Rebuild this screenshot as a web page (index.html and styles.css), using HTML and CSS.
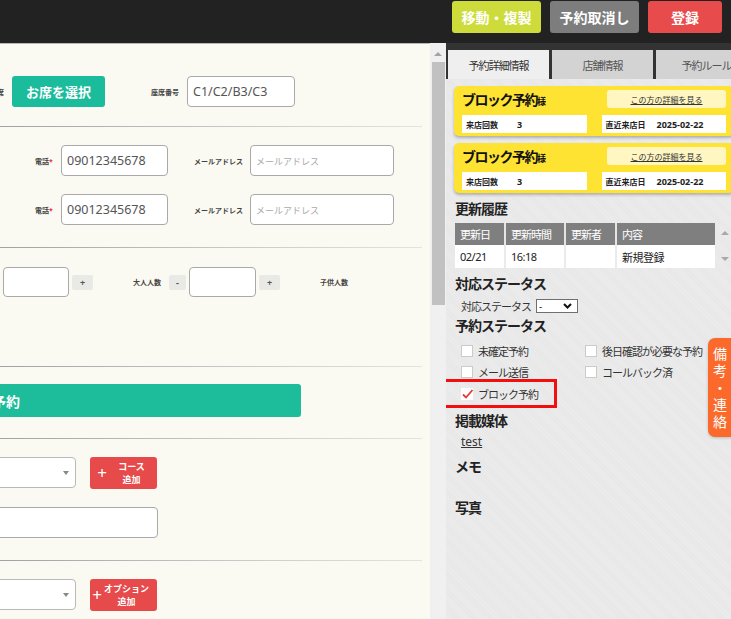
FILE: index.html
```html
<!DOCTYPE html>
<html lang="ja">
<head>
    <meta charset="UTF-8">
    <title>予約詳細</title>
    <link rel="stylesheet" href="styles.css">
</head>
<body>
    <header class="topbar">
        <button class="btn-top lime">移動・複製</button>
        <button class="btn-top gray">予約取消し</button>
        <button class="btn-top red">登録</button>
    </header>

    <div class="page">
        <main class="form">
            <section class="sec s1">
                <div class="row">
                    <span class="lbl seat-lbl">お席</span>
                    <button class="btn-seat">お席を選択</button>
                    <span class="lbl seatno-lbl">座席番号</span>
                    <input class="inp seatno" type="text" value="C1/C2/B3/C3">
                </div>
            </section>
            <hr class="rule">

            <section class="sec s2">
                <div class="row">
                    <span class="lbl tel-lbl">電話<span class="req">*</span></span>
                    <input class="inp tel" type="text" value="09012345678">
                    <span class="lbl mail-lbl">メールアドレス</span>
                    <input class="inp mail" type="text" placeholder="メールアドレス">
                </div>
                <div class="row">
                    <span class="lbl tel-lbl">電話<span class="req">*</span></span>
                    <input class="inp tel" type="text" value="09012345678">
                    <span class="lbl mail-lbl">メールアドレス</span>
                    <input class="inp mail" type="text" placeholder="メールアドレス">
                </div>
            </section>
            <hr class="rule">

            <section class="sec s3">
                <div class="row row-num">
                    <input class="inp num first" type="text">
                    <button class="step">+</button>
                    <span class="lbl adult-lbl">大人人数</span>
                    <button class="step minus">-</button>
                    <input class="inp num" type="text">
                    <button class="step">+</button>
                    <span class="lbl kid-lbl">子供人数</span>
                </div>
            </section>
            <hr class="rule">

            <section class="sec s4">
                <div class="name-bar">ブロック予約</div>
            </section>
            <hr class="rule">

            <section class="sec s5">
                <div class="row">
                    <div class="sel"></div>
                    <button class="btn-add"><span class="plus">+</span><span class="add-txt">コース<br>追加</span></button>
                </div>
                <div class="row">
                    <input class="inp wide" type="text">
                </div>
            </section>
            <hr class="rule">

            <section class="sec s6">
                <div class="row">
                    <div class="sel"></div>
                    <button class="btn-add"><span class="plus">+</span><span class="add-txt">オプション<br>追加</span></button>
                </div>
            </section>
        </main>

        <div class="scrollbar">
            <span class="sb-up"></span>
            <span class="sb-thumb"></span>
        </div>

        <aside class="side">
            <nav class="tabs">
                <a class="tab active">予約詳細情報</a>
                <a class="tab">店舗情報</a>
                <a class="tab">予約ルール</a>
            </nav>

            <div class="detail">
                <div class="card">
                    <div class="card-head">
                        <span class="card-name">ブロック予約<small>様</small></span>
                        <a class="card-link">この方の詳細を見る</a>
                    </div>
                    <div class="card-cells">
                        <div class="cell"><span class="cell-k">来店回数</span><span class="cell-v">3</span></div>
                        <div class="cell"><span class="cell-k">直近来店日</span><span class="cell-v">2025-02-22</span></div>
                    </div>
                </div>
                <div class="card">
                    <div class="card-head">
                        <span class="card-name">ブロック予約<small>様</small></span>
                        <a class="card-link">この方の詳細を見る</a>
                    </div>
                    <div class="card-cells">
                        <div class="cell"><span class="cell-k">来店回数</span><span class="cell-v">3</span></div>
                        <div class="cell"><span class="cell-k">直近来店日</span><span class="cell-v">2025-02-22</span></div>
                    </div>
                </div>

                <h3 class="ttl">更新履歴</h3>
                <div class="hist">
                    <table class="hist-tbl">
                        <tr>
                            <th class="c1">更新日</th>
                            <th class="c2">更新時間</th>
                            <th class="c3">更新者</th>
                            <th class="c4">内容</th>
                        </tr>
                        <tr>
                            <td>02/21</td>
                            <td>16:18</td>
                            <td></td>
                            <td>新規登録</td>
                        </tr>
                    </table>
                    <span class="arr up"></span>
                    <span class="arr down"></span>
                </div>

                <h3 class="ttl">対応ステータス</h3>
                <div class="status-row">
                    <span>対応ステータス</span>
                    <div class="mini-sel">
                        <span>-</span>
                        <svg width="9" height="6" viewBox="0 0 9 6"><path d="M1 1 L4.5 4.5 L8 1" fill="none" stroke="#111" stroke-width="2"/></svg>
                    </div>
                </div>

                <h3 class="ttl">予約ステータス</h3>
                <div class="checks">
                    <label class="chk"><span class="cb"></span>未確定予約</label>
                    <label class="chk"><span class="cb"></span>後日確認が必要な予約</label>
                    <label class="chk"><span class="cb"></span>メール送信</label>
                    <label class="chk"><span class="cb"></span>コールバック済</label>
                    <label class="chk marked"><span class="cb on"><svg width="13" height="12" viewBox="0 0 13 12"><path d="M2 6.5 L5 9.5 L11.5 2" fill="none" stroke="#e5393b" stroke-width="1.8"/></svg></span>ブロック予約</label>
                </div>

                <h3 class="ttl">掲載媒体</h3>
                <a class="media">test</a>

                <h3 class="ttl memo">メモ</h3>
                <h3 class="ttl photo">写真</h3>
            </div>

            <div class="memo-tab">備考・連絡</div>
        </aside>
    </div>
</body>
</html>
```

FILE: styles.css
```css
body {
    margin: 0;
    width: 731px;
    height: 619px;
    overflow: hidden;
    font-family: "Noto Sans", "Noto Sans CJK JP", sans-serif;
    font-size: 12px;
    color: #333;
}

button, input {
    font-family: inherit;
}

/* top bar */
.topbar {
    height: 43px;
    box-sizing: border-box;
    background: #222;
    display: flex;
    justify-content: flex-end;
    align-items: flex-start;
    gap: 9px;
    padding: 1px 9px 0 0;
}

.btn-top {
    height: 32px;
    border: 0;
    border-radius: 3px;
    color: #fff;
    font-size: 14px;
    font-weight: bold;
    padding: 0;
}

.lime { width: 89px; background: #cddc3b; }
.gray { width: 89px; background: #7d7d7d; }
.red { width: 74px; background: #e84b4b; }

.page {
    display: flex;
    height: 576px;
}

/* left form */
.form {
    width: 430px;
    flex: none;
    overflow: hidden;
    box-sizing: border-box;
    border-top: 1px solid #b9b9b9;
    background: #fbfaf2;
}

.sec {
    display: flex;
    flex-direction: column;
}

.s1 { padding: 32px 0 19px; }
.s2 { padding: 18px 0 22px; gap: 18px; }
.s3 { padding: 19px 0 69px; }
.s4 { padding: 17px 0 21px; }
.s5 { padding: 18px 0 22px; gap: 19px; }
.s6 { padding: 18px 0 0; }

.rule {
    width: 422px;
    height: 1px;
    margin: 0;
    border: 0;
    background: linear-gradient(to right, #a2a2a2, #c8c8c8 55%, #e4e4dc);
}

.row {
    display: flex;
    align-items: center;
    height: 31px;
}

.lbl {
    font-size: 7px;
    font-weight: bold;
    color: #444;
    white-space: nowrap;
}

.req { color: #e33; }

.inp {
    box-sizing: border-box;
    height: 31px;
    border: 1px solid #a9a9a9;
    border-radius: 4px;
    background: #fff;
    padding: 0 5px;
    font-size: 12.5px;
    color: #555;
    outline: none;
}

.inp::placeholder {
    color: #aaa;
    font-size: 9px;
}

.seat-lbl { margin-left: -10px; width: 14px; }

.btn-seat {
    margin-left: 8px;
    width: 93px;
    height: 31px;
    border: 0;
    border-radius: 3px;
    background: #1abc9c;
    color: #fff;
    font-size: 13px;
    font-weight: bold;
}

.seatno-lbl { margin-left: 46px; }
.seatno { margin-left: 8px; width: 108px; }

.tel-lbl { margin-left: 35px; width: 20px; }
.tel { margin-left: 6px; width: 107px; }
.mail-lbl { margin-left: 26px; }
.mail { margin-left: 7px; width: 144px; }

.row-num { height: 30px; }

.num {
    height: 30px;
    width: 67px;
}

.num.first { margin-left: 3px; width: 66px; }

.step {
    margin-left: 3px;
    width: 21px;
    height: 15px;
    padding: 0;
    border: 0;
    border-radius: 2px;
    background: #e9e9e6;
    color: #555;
    font-size: 9px;
    font-weight: bold;
}

.step.minus { margin-left: 8px; width: 17px; margin-right: 3px; }

.adult-lbl { margin-left: 40px; }
.kid-lbl { margin-left: 40px; }

.name-bar {
    margin-left: -80px;
    width: 381px;
    height: 33px;
    box-sizing: border-box;
    padding-left: 16px;
    display: flex;
    align-items: center;
    border-radius: 3px;
    background: #1dbc9b;
    color: #fff;
    font-size: 14px;
    font-weight: bold;
}

.sel {
    position: relative;
    box-sizing: border-box;
    margin-left: -44px;
    width: 120px;
    height: 31px;
    border: 1px solid #b9b9b9;
    border-radius: 4px;
    background: #fff;
}

.sel::after {
    content: "";
    position: absolute;
    right: 6px;
    top: 13px;
    border-left: 3px solid transparent;
    border-right: 3px solid transparent;
    border-top: 4px solid #888;
}

.btn-add {
    margin-left: 14px;
    width: 67px;
    height: 32px;
    padding: 0;
    border: 0;
    border-radius: 3px;
    background: #e64a4a;
    color: #fff;
    display: flex;
    align-items: center;
}

.plus {
    width: 24px;
    font-size: 17px;
    text-align: center;
}

.add-txt {
    flex: 1;
    padding-right: 8px;
    font-size: 9px;
    font-weight: bold;
    line-height: 13px;
    text-align: center;
    white-space: nowrap;
}

.wide { margin-left: -40px; width: 198px; }

/* scrollbar */
.scrollbar {
    width: 16px;
    flex: none;
    background: #f0f0f0;
    display: flex;
    flex-direction: column;
    align-items: center;
}

.sb-up {
    margin-top: 9px;
    border-left: 4px solid transparent;
    border-right: 4px solid transparent;
    border-bottom: 4px solid #a3a3a3;
}

.sb-thumb {
    margin: 6px 0 0 1px;
    width: 13px;
    height: 243px;
    background: #c1c1c1;
}

/* right panel */
.side {
    flex: 1;
    position: relative;
    overflow: hidden;
    background: repeating-linear-gradient(45deg, #ececec 0 1px, #e7e7e7 1px 2px);
}

.tabs {
    height: 36px;
    box-sizing: border-box;
    padding: 7px 0 0 2px;
    display: flex;
    gap: 3px;
    background: #333;
}

.tab {
    width: 101px;
    height: 29px;
    flex: none;
    display: flex;
    align-items: center;
    justify-content: center;
    background: #d3d3d3;
    color: #555;
    font-size: 11px;
    letter-spacing: -1px;
}

.tab.active {
    background: #efefef;
    color: #333;
}

.detail {
    padding: 7px 0 0 8px;
}

.card {
    width: 280px;
    box-sizing: border-box;
    margin-bottom: 7px;
    padding: 4px 8px 3px;
    border-radius: 5px;
    background: #fee332;
    box-shadow: 0 2px 3px rgba(0, 0, 0, 0.25);
}

.card-head {
    height: 18px;
    display: flex;
    align-items: center;
    justify-content: space-between;
}

.card-name {
    font-size: 14px;
    font-weight: bold;
    letter-spacing: -1.5px;
    color: #111;
}

.card-name small {
    font-size: 9px;
    letter-spacing: 0;
}

.card-link {
    width: 119px;
    height: 18px;
    border-radius: 3px;
    background: #fff6c2;
    display: flex;
    align-items: center;
    justify-content: center;
    font-size: 8px;
    color: #333;
    text-decoration: underline;
}

.card-cells {
    margin-top: 7px;
    display: grid;
    grid-template-columns: 1fr 1fr;
    gap: 15px;
}

.cell {
    height: 18px;
    padding-left: 4px;
    display: flex;
    align-items: center;
    background: #fff;
    font-weight: bold;
    color: #222;
}

.cell-k {
    width: 51px;
    font-size: 8px;
}

.cell-v {
    font-size: 9px;
}

.ttl {
    margin: 7px 0 0 1px;
    font-size: 14px;
    line-height: 18px;
    letter-spacing: -1px;
    color: #222;
}

.hist {
    position: relative;
    margin: 5px 0 0 1px;
}

.hist-tbl {
    width: 260px;
    border-collapse: collapse;
    font-size: 11px;
}

.hist-tbl th {
    height: 22px;
    padding: 0 0 0 5px;
    background: #7f7f7f;
    color: #fff;
    font-weight: normal;
    letter-spacing: -1px;
    text-align: left;
    border-left: 2px solid #e5e5e5;
}

.hist-tbl td {
    height: 23px;
    padding: 0 0 0 5px;
    background: #fff;
    color: #222;
    border-left: 2px solid #ebebeb;
    letter-spacing: -0.5px;
}

.hist-tbl th:first-child,
.hist-tbl td:first-child { border-left: 0; }

.c1 { width: 44px; }
.c2 { width: 53px; }
.c3 { width: 44px; }

.arr {
    position: absolute;
    left: 266px;
    border-left: 4px solid transparent;
    border-right: 4px solid transparent;
}

.arr.up { top: 8px; border-bottom: 4px solid #a8a8a8; }
.arr.down { top: 34px; border-top: 4px solid #a8a8a8; }

.status-row {
    margin: 5px 0 0 7px;
    height: 15px;
    display: flex;
    align-items: center;
    gap: 5px;
    font-size: 11px;
    letter-spacing: -1px;
}

.mini-sel {
    width: 42px;
    height: 14px;
    box-sizing: border-box;
    border: 1px solid #6f6f6f;
    background: #fff;
    display: flex;
    align-items: center;
    justify-content: space-between;
    padding: 0 5px 0 2px;
    font-size: 10px;
    letter-spacing: 0;
}

.ttl + .status-row + .ttl { margin-top: 4px; }

.checks {
    margin: 5px 0 0 7px;
    display: grid;
    grid-template-columns: 124px 1fr;
    grid-auto-rows: 21.5px;
}

.chk {
    position: relative;
    display: flex;
    align-items: center;
    gap: 5px;
    font-size: 11px;
    letter-spacing: -1px;
    color: #333;
}

.cb {
    width: 12px;
    height: 12px;
    flex: none;
    box-sizing: border-box;
    border: 1px solid #cbcbcb;
    background: #fff;
    position: relative;
}

.cb.on {
    border-color: #fff;
}

.cb svg {
    position: absolute;
    left: -1px;
    top: -1px;
}

.marked::after {
    content: "";
    position: absolute;
    left: -19px;
    top: -4px;
    width: 115px;
    height: 29px;
    box-sizing: border-box;
    border: 3px solid #f10f0f;
}

.checks + .ttl { margin-top: 7px; }

.media {
    display: block;
    margin: 4px 0 0 7px;
    line-height: 16px;
    font-size: 12px;
    color: #333;
    text-decoration: underline;
}

.ttl.memo { margin-top: 8px; }
.ttl.photo { margin-top: 23px; }

.memo-tab {
    position: absolute;
    left: 262px;
    top: 295px;
    width: 14px;
    height: 99px;
    box-sizing: border-box;
    padding: 6.5px 11px 0 5px;
    width: 30px;
    border-radius: 7px 0 0 7px;
    background: #fb6a2b;
    box-shadow: 0 1px 3px rgba(0, 0, 0, 0.2);
    color: #fff;
    font-size: 14px;
    line-height: 17px;
    line-break: anywhere;
    word-break: break-all;
}
```
